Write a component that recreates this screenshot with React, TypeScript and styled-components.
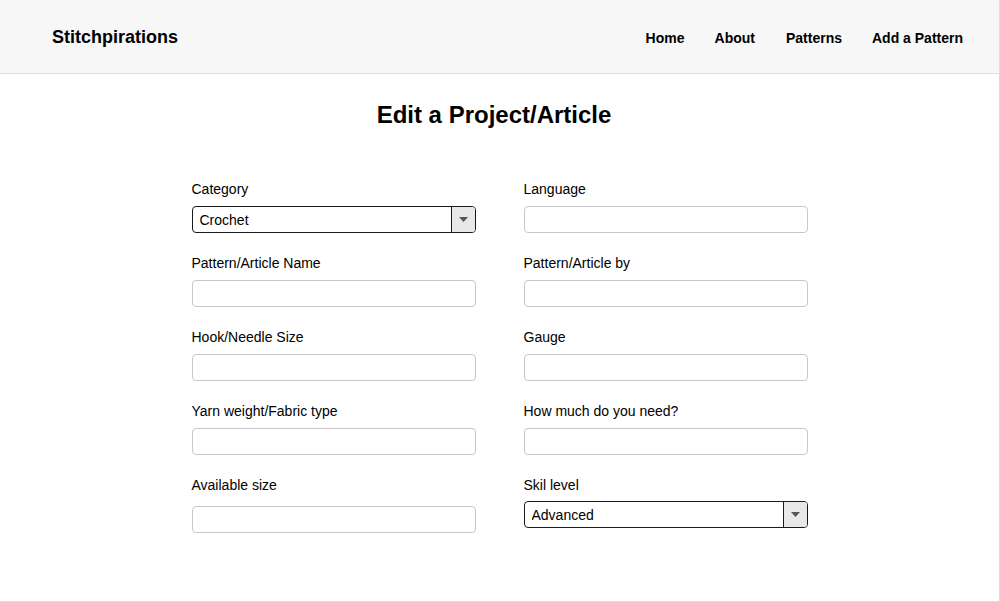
import React from "react";
import styled, { createGlobalStyle } from "styled-components";

const Global = createGlobalStyle`
  html, body { margin: 0; padding: 0; background: #fff; }
  body { font-family: "Liberation Sans", Arial, Helvetica, sans-serif; color: #000; }
  * { box-sizing: border-box; }
`;

const Page = styled.div`
  width: 1000px;
  height: 602px;
  border-right: 1px solid #dcdcdc;
  border-bottom: 1px solid #dcdcdc;
  display: flex;
  flex-direction: column;
  overflow: hidden;
`;

const Header = styled.header`
  height: 74px;
  flex: none;
  background: #f7f7f7;
  border-bottom: 1px solid #dddddd;
  display: flex;
  align-items: center;
  justify-content: space-between;
  padding: 0 36px 0 52px;
`;

const Logo = styled.div`
  font-size: 18px;
  font-weight: 700;
  line-height: 22px;
  margin-top: 1px;
`;

const Nav = styled.nav`
  display: flex;
  gap: 30px;
  margin-top: 3px;
`;

const NavLink = styled.a<{ $extra?: number }>`
  font-size: 14px;
  font-weight: 700;
  color: #000;
  text-decoration: none;
  line-height: 16px;
  margin-left: ${(p) => p.$extra ?? 0}px;
`;

const Main = styled.main`
  display: flex;
  flex-direction: column;
  align-items: center;
`;

const Title = styled.h1`
  font-size: 24px;
  font-weight: 700;
  line-height: 28px;
  margin: 27px 11px 0 0;
`;

const Form = styled.form`
  margin-top: 52px;
  width: 616px;
  display: grid;
  grid-template-columns: 284px 284px;
  column-gap: 48px;
  row-gap: 22px;
`;

const Field = styled.div`
  display: flex;
  flex-direction: column;
`;

const Label = styled.label`
  font-size: 14px;
  line-height: 16px;
  display: block;
`;

const TextInput = styled.input<{ $offset?: number }>`
  margin-top: ${(p) => 9 + (p.$offset ?? 0)}px;
  height: 27px;
  width: 100%;
  border: 1px solid #c8c8c8;
  border-radius: 4px;
  background: #fff;
  font-family: inherit;
  font-size: 14px;
  padding: 0 7px;
  outline: none;
`;

const SelectBox = styled.div<{ $offset?: number }>`
  margin-top: ${(p) => 9 + (p.$offset ?? 0)}px;
  height: 27px;
  display: flex;
  border: 1px solid #1a1a1a;
  border-radius: 4px;
  overflow: hidden;
  background: #fff;
`;

const NativeSelect = styled.select`
  flex: 1;
  appearance: none;
  -webkit-appearance: none;
  border: none;
  background: transparent;
  font-family: inherit;
  font-size: 14px;
  color: #000;
  padding: 0 7px;
  outline: none;
`;

const ArrowBox = styled.div`
  width: 24px;
  flex: none;
  background: #e8e8e8;
  border-left: 1px solid #1a1a1a;
  display: flex;
  align-items: center;
  justify-content: center;
`;

const Arrow = () => (
  <svg width="9" height="5" viewBox="0 0 9 5">
    <path d="M0 0 H9 L4.5 5 Z" fill="#555" />
  </svg>
);

const Select = ({ value, options, offset }: { value: string; options: string[]; offset?: number }) => (
  <SelectBox $offset={offset}>
    <NativeSelect defaultValue={value}>
      {options.map((o) => (
        <option key={o}>{o}</option>
      ))}
    </NativeSelect>
    <ArrowBox>
      <Arrow />
    </ArrowBox>
  </SelectBox>
);

export default function App() {
  return (
    <>
      <Global />
      <Page>
        <Header>
          <Logo>Stitchpirations</Logo>
          <Nav>
            <NavLink href="#">Home</NavLink>
            <NavLink href="#">About</NavLink>
            <NavLink href="#" $extra={1}>Patterns</NavLink>
            <NavLink href="#">Add a Pattern</NavLink>
          </Nav>
        </Header>
        <Main>
          <Title>Edit a Project/Article</Title>
          <Form onSubmit={(e) => e.preventDefault()}>
            <Field>
              <Label>Category</Label>
              <Select value="Crochet" options={["Crochet", "Knitting", "Sewing", "Embroidery"]} />
            </Field>
            <Field>
              <Label>Language</Label>
              <TextInput />
            </Field>
            <Field>
              <Label>Pattern/Article Name</Label>
              <TextInput />
            </Field>
            <Field>
              <Label>Pattern/Article by</Label>
              <TextInput />
            </Field>
            <Field>
              <Label>Hook/Needle Size</Label>
              <TextInput />
            </Field>
            <Field>
              <Label>Gauge</Label>
              <TextInput />
            </Field>
            <Field>
              <Label>Yarn weight/Fabric type</Label>
              <TextInput />
            </Field>
            <Field>
              <Label>How much do you need?</Label>
              <TextInput />
            </Field>
            <Field>
              <Label>Available size</Label>
              <TextInput $offset={4} />
            </Field>
            <Field>
              <Label>Skil level</Label>
              <Select value="Advanced" options={["Beginner", "Intermediate", "Advanced"]} offset={-1} />
            </Field>
          </Form>
        </Main>
      </Page>
    </>
  );
}
